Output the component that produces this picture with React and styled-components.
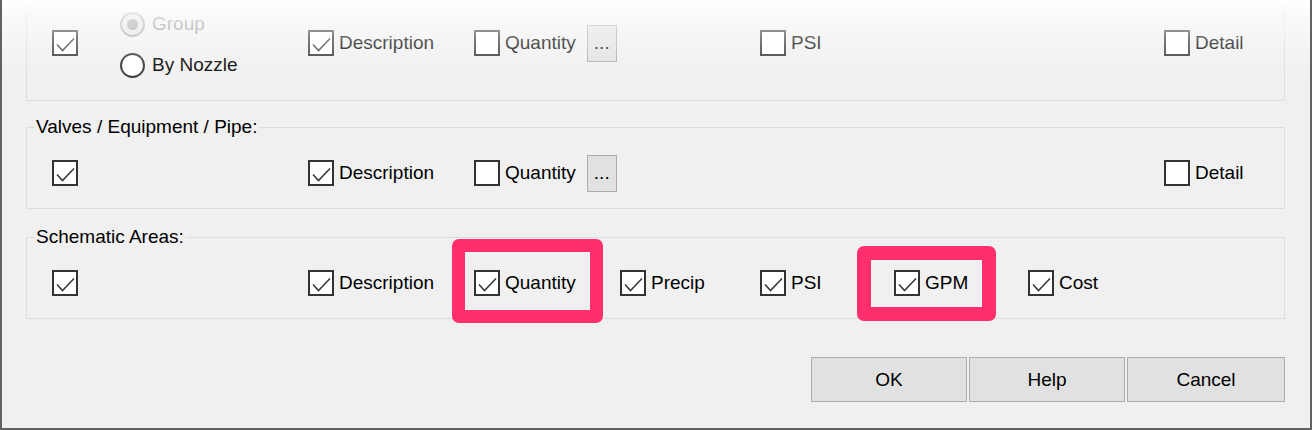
import React from "react";
import styled, { createGlobalStyle } from "styled-components";

const Global = createGlobalStyle`
  html, body { margin: 0; padding: 0; }
  body {
    background: #626262;
    font-family: "Liberation Sans", Arial, sans-serif;
    width: 1312px;
    height: 430px;
    overflow: hidden;
  }
`;

const Dialog = styled.div`
  position: relative;
  box-sizing: border-box;
  margin-left: 2px;
  width: 1308px;
  height: 428px;
  background: #f0f0f0;
  padding: 0 25px 0 24px;
  display: flex;
  flex-direction: column;
  font-family: "Liberation Sans", Arial, sans-serif;
  font-size: 19px;
  color: #000;
`;

const Group = styled.fieldset`
  margin: ${(p) => p.$gapTop || 0}px 0 0 0;
  padding: 0;
  border: 1px solid #dcdcdc;
  border-top: ${(p) => (p.$clipped ? "none" : "1px solid #dcdcdc")};
  min-inline-size: auto;
`;

const Legend = styled.legend`
  margin-left: 7px;
  padding: 0 2px;
  font-size: 19px;
  line-height: 22px;
  color: #000;
`;

const Row = styled.div`
  display: grid;
  grid-template-columns: 68px 188px 166px 146px 140px 134px 134px 136px 1fr;
  align-items: center;
  padding-left: 25px;
  height: ${(p) => p.$h}px;
  padding-bottom: ${(p) => p.$pb || 0}px;
`;

const Cell = styled.div`
  grid-column: ${(p) => p.$col};
  display: flex;
  align-items: center;
`;

const CheckLabel = styled.label`
  display: inline-flex;
  align-items: center;
  gap: 5px;
  white-space: nowrap;
  line-height: 22px;
  color: #000;
`;

const Box = styled.span`
  box-sizing: border-box;
  width: 26px;
  height: 26px;
  border: 2px solid #333;
  background: #fff;
  display: inline-flex;
  flex: none;
  position: relative;
  svg { position: absolute; left: -2px; top: -2px; }
`;

const Check = ({ checked, children }) => (
  <CheckLabel>
    <Box>
      {checked && (
        <svg width="26" height="26" viewBox="0 0 26 26">
          <path d="M5 14.5 L10.5 20.5 L22 8.5" fill="none" stroke="#3a3a3a" strokeWidth="1.6" />
        </svg>
      )}
    </Box>
    {children}
  </CheckLabel>
);

const RadioStack = styled.div`
  display: flex;
  flex-direction: column;
  gap: 16px;
  margin-top: 3px;
`;

const RadioLabel = styled.label`
  display: inline-flex;
  align-items: center;
  gap: 7px;
  line-height: 22px;
  white-space: nowrap;
  color: ${(p) => (p.$disabled ? "#8f8f8f" : "#000")};
`;

const RadioDot = styled.span`
  box-sizing: border-box;
  width: 25px;
  height: 25px;
  border-radius: 50%;
  border: 2px solid ${(p) => (p.$disabled ? "#a8a8a8" : "#333")};
  background: ${(p) => (p.$disabled ? "#e4e4e4" : "#fff")};
  display: inline-flex;
  align-items: center;
  justify-content: center;
  flex: none;
  &::after {
    content: "";
    display: ${(p) => (p.$on ? "block" : "none")};
    width: 11px;
    height: 11px;
    border-radius: 50%;
    background: #9c9c9c;
  }
`;

const MoreButton = styled.span`
  box-sizing: border-box;
  width: 30px;
  height: 37px;
  margin-left: 11px;
  border: 1px solid #adadad;
  background: #e1e1e1;
  display: inline-flex;
  align-items: center;
  justify-content: center;
  font-size: 19px;
  line-height: 1;
  padding-bottom: 2px;
`;

const ButtonBar = styled.div`
  display: flex;
  justify-content: flex-end;
  gap: 2px;
  margin-top: 38px;
`;

const DlgButton = styled.button`
  box-sizing: border-box;
  width: ${(p) => p.$w || 156}px;
  height: 45px;
  border: 1px solid #adadad;
  background: #e1e1e1;
  font-family: "Liberation Sans", Arial, sans-serif;
  font-size: 19px;
  color: #000;
  padding: 0;
`;

const Fade = styled.div`
  position: absolute;
  left: 0;
  right: 0;
  top: 0;
  height: 95px;
  pointer-events: none;
  background: linear-gradient(
    to bottom,
    rgba(255, 255, 255, 0.98) 0px,
    rgba(255, 255, 255, 0.6) 18px,
    rgba(255, 255, 255, 0.32) 43px,
    rgba(255, 255, 255, 0.1) 66px,
    rgba(255, 255, 255, 0) 95px
  );
`;

const Highlight = styled.div`
  position: absolute;
  box-sizing: border-box;
  left: ${(p) => p.$x}px;
  top: ${(p) => p.$y}px;
  width: ${(p) => p.$w}px;
  height: ${(p) => p.$h}px;
  border: ${(p) => p.$b}px solid #ff2e6d;
  border-radius: 7px;
  pointer-events: none;
`;

export default function App() {
  return (
    <>
      <Global />
      <Dialog>
        <Group $clipped>
          <Row $h={86} $pb={14}>
            <Cell $col={1}><Check checked /></Cell>
            <Cell $col={2}>
              <RadioStack>
                <RadioLabel $disabled><RadioDot $disabled $on />Group</RadioLabel>
                <RadioLabel><RadioDot />By Nozzle</RadioLabel>
              </RadioStack>
            </Cell>
            <Cell $col={3}><Check checked>Description</Check></Cell>
            <Cell $col={4}><Check>Quantity</Check><MoreButton>...</MoreButton></Cell>
            <Cell $col={6}><Check>PSI</Check></Cell>
            <Cell $col={9}><Check>Detail</Check></Cell>
          </Row>
        </Group>

        <Group $gapTop={15}>
          <Legend>Valves / Equipment / Pipe:</Legend>
          <Row $h={70}>
            <Cell $col={1}><Check checked /></Cell>
            <Cell $col={3}><Check checked>Description</Check></Cell>
            <Cell $col={4}><Check>Quantity</Check><MoreButton>...</MoreButton></Cell>
            <Cell $col={9}><Check>Detail</Check></Cell>
          </Row>
        </Group>

        <Group $gapTop={17}>
          <Legend>Schematic Areas:</Legend>
          <Row $h={70}>
            <Cell $col={1}><Check checked /></Cell>
            <Cell $col={3}><Check checked>Description</Check></Cell>
            <Cell $col={4}><Check checked>Quantity</Check></Cell>
            <Cell $col={5}><Check checked>Precip</Check></Cell>
            <Cell $col={6}><Check checked>PSI</Check></Cell>
            <Cell $col={7}><Check checked>GPM</Check></Cell>
            <Cell $col={8}><Check checked>Cost</Check></Cell>
          </Row>
        </Group>

        <ButtonBar>
          <DlgButton>OK</DlgButton>
          <DlgButton>Help</DlgButton>
          <DlgButton $w={158}>Cancel</DlgButton>
        </ButtonBar>

        <Fade />
        <Highlight $x={450} $y={239} $w={151} $h={84} $b={13} />
        <Highlight $x={855} $y={246} $w={139} $h={75} $b={14} />
      </Dialog>
    </>
  );
}
